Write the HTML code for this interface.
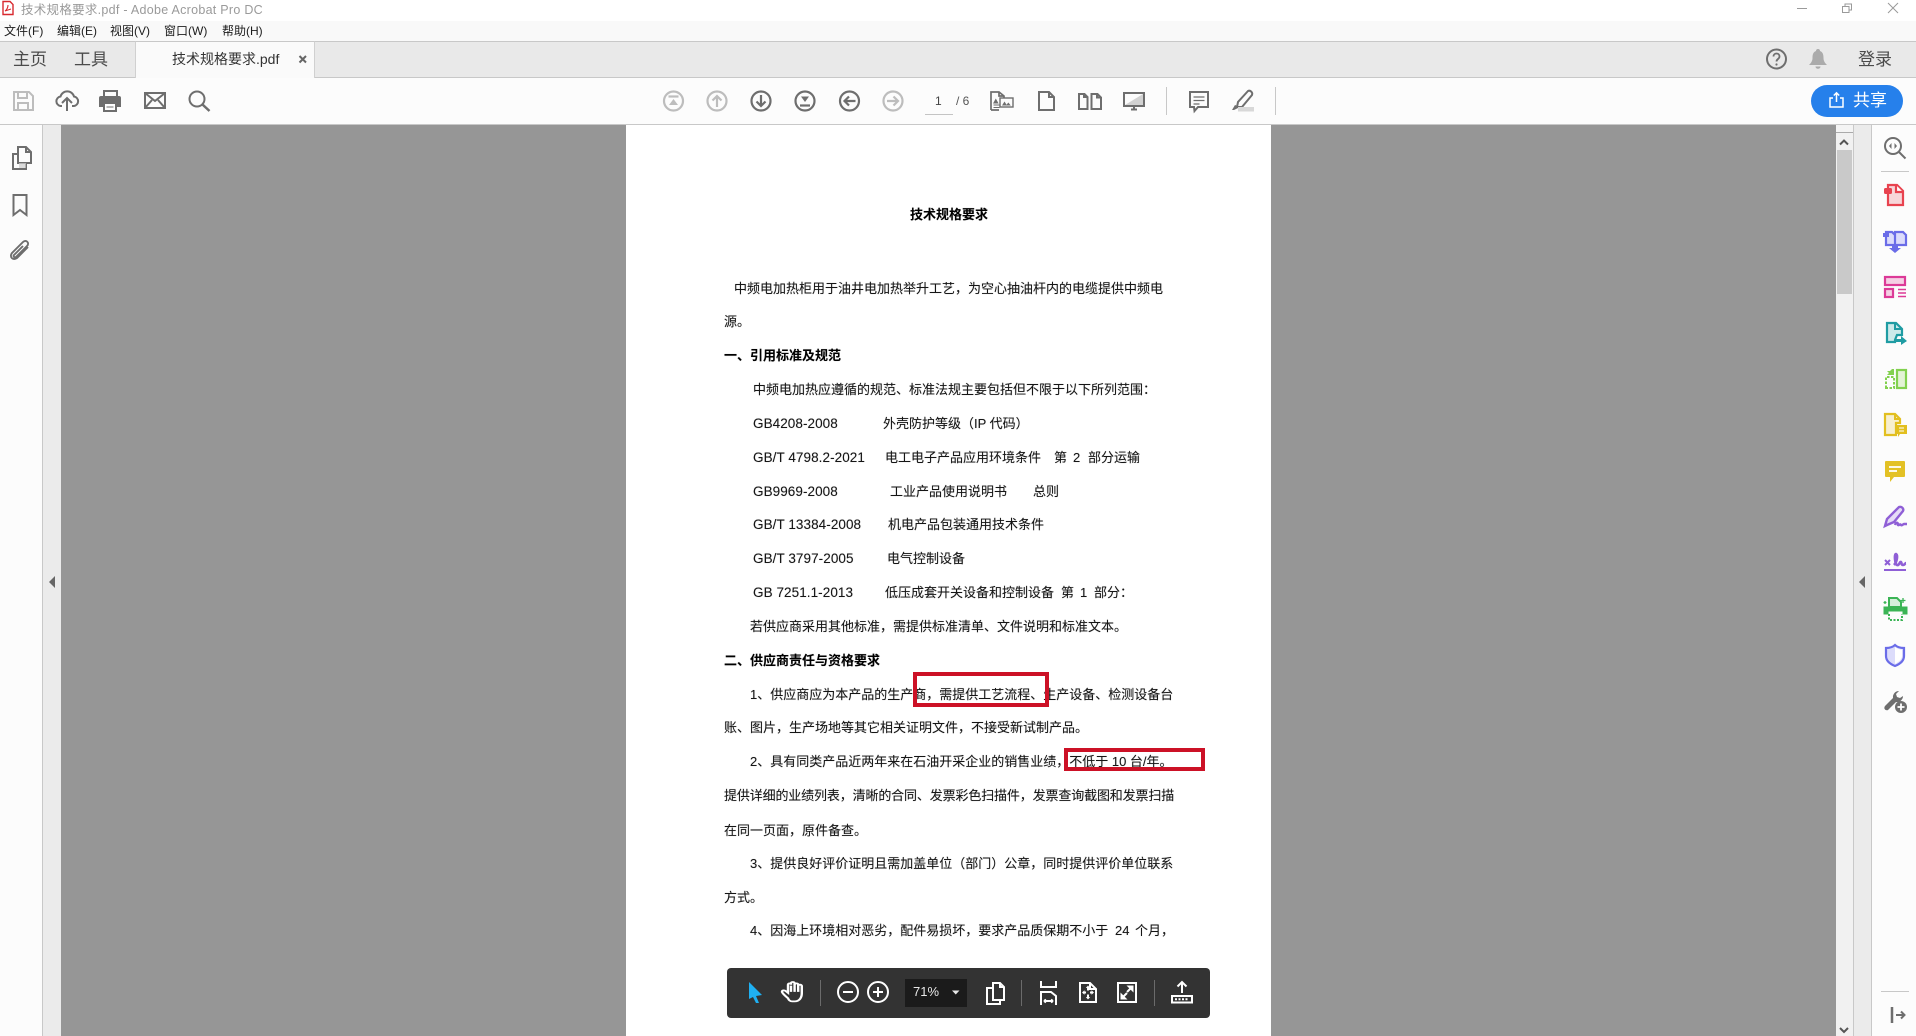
<!DOCTYPE html>
<html lang="zh"><head><meta charset="utf-8"><title>技术规格要求.pdf - Adobe Acrobat Pro DC</title>
<style>
html,body{margin:0;padding:0;width:1916px;height:1036px;overflow:hidden;background:#fff}
body{position:relative;font-family:"Liberation Sans","Noto Sans CJK SC",sans-serif;color:#222}
.b{position:absolute}
.t{position:absolute;white-space:pre;line-height:20px;height:20px}
.p{position:absolute;white-space:pre;line-height:20px;height:20px;font-size:13px;color:#151515;font-family:"Liberation Sans","Noto Sans CJK SC",sans-serif;font-weight:400;text-shadow:0 0 .7px rgba(0,0,0,.35)}
.p i{font-style:normal;font-size:13.5px;letter-spacing:.07px}
.h{font-weight:700;color:#000}
svg{position:absolute;left:0;top:0}
.d{fill:none;stroke:#6e6e6e;stroke-width:2}
.l{fill:none;stroke:#bdbdbd;stroke-width:2}
.w{fill:none;stroke:#fff;stroke-width:2}
</style></head><body>
<div class="b" style="left:0;top:0;width:1916px;height:21px;background:#fff"></div>
<div class="b" style="left:0;top:21px;width:1916px;height:20px;background:#f9f9f9"></div>
<div class="b" style="left:0;top:41px;width:1916px;height:1px;background:#c8c8c8"></div>
<div class="b" style="left:0;top:42px;width:1916px;height:35px;background:#e9e9e9"></div>
<div class="b" style="left:0;top:77px;width:1916px;height:1px;background:#c8c8c8"></div>
<div class="b" style="left:135px;top:41px;width:180px;height:37px;background:#fafafa;border-left:1px solid #d0d0d0;border-right:1px solid #d0d0d0;box-sizing:border-box;border-top:1px solid #c8c8c8"></div>
<div class="b" style="left:0;top:78px;width:1916px;height:46px;background:#fcfcfc"></div>
<div class="b" style="left:0;top:124px;width:1916px;height:1px;background:#c8c8c8"></div>
<div class="b" style="left:0;top:125px;width:42px;height:911px;background:#fcfcfc"></div>
<div class="b" style="left:42px;top:125px;width:1px;height:911px;background:#c8c8c8"></div>
<div class="b" style="left:43px;top:125px;width:18px;height:911px;background:#ebebeb"></div>
<div class="b" style="left:61px;top:125px;width:1775px;height:911px;background:#969696"></div>
<div class="b" style="left:626px;top:125px;width:645px;height:911px;background:#fff"></div>
<div class="b" style="left:1836px;top:125px;width:17px;height:911px;background:#f1f1f1"></div>
<div class="b" style="left:1853px;top:125px;width:1px;height:911px;background:#c8c8c8"></div>
<div class="b" style="left:1854px;top:125px;width:17px;height:911px;background:#ebebeb"></div>
<div class="b" style="left:1871px;top:125px;width:1px;height:911px;background:#c8c8c8"></div>
<div class="b" style="left:1872px;top:125px;width:44px;height:911px;background:#fcfcfc"></div>
<div class="b" style="left:1836px;top:125px;width:17px;height:8px;background:#f4f4f4;border-bottom:1px solid #aaa;box-sizing:border-box"></div>
<div class="b" style="left:1837px;top:150px;width:15px;height:144px;background:#c9c9c9"></div>
<div class="b" style="left:925px;top:114px;width:28px;height:1px;background:#c4c4c4"></div>
<div class="b" style="left:1166px;top:87px;width:1px;height:28px;background:#c8c8c8"></div>
<div class="b" style="left:1275px;top:87px;width:1px;height:28px;background:#c8c8c8"></div>
<div class="b" style="left:1881px;top:171px;width:28px;height:1px;background:#c8c8c8"></div>
<div class="b" style="left:1881px;top:991px;width:28px;height:1px;background:#c8c8c8"></div>
<div class="b" style="left:1811px;top:85px;width:92px;height:32px;border-radius:16px;background:#2680eb"></div>

<div class="t" style="left:21px;top:0;font-size:12.5px;letter-spacing:.28px;color:#9a9a9a">技术规格要求.pdf - Adobe Acrobat Pro DC</div>
<div class="t" style="left:4px;top:21px;font-size:12px;color:#1c1c1c">文件(F)</div>
<div class="t" style="left:57px;top:21px;font-size:12px;color:#1c1c1c">编辑(E)</div>
<div class="t" style="left:110px;top:21px;font-size:12px;color:#1c1c1c">视图(V)</div>
<div class="t" style="left:164px;top:21px;font-size:12px;color:#1c1c1c">窗口(W)</div>
<div class="t" style="left:222px;top:21px;font-size:12px;color:#1c1c1c">帮助(H)</div>
<div class="t" style="left:13px;top:50px;font-size:17px;color:#4b4b4b">主页</div>
<div class="t" style="left:74px;top:50px;font-size:17px;color:#4b4b4b">工具</div>
<div class="t" style="left:172px;top:49px;font-size:14px;color:#333">技术规格要求.pdf</div>
<div class="t" style="left:1858px;top:50px;font-size:17px;color:#4b4b4b">登录</div>
<div class="t" style="left:1853px;top:91px;font-size:17px;color:#fff">共享</div>
<div class="t" style="left:935px;top:91px;font-size:12px;color:#444">1</div>
<div class="t" style="left:956px;top:91px;font-size:12px;color:#555">/ 6</div>

<div class="p h" style="left:910px;top:205px">技术规格要求</div>
<div class="p" style="left:734px;top:279px">中频电加热柜用于油井电加热举升工艺，为空心抽油杆内的电缆提供中频电</div>
<div class="p" style="left:724px;top:312px">源。</div>
<div class="p h" style="left:724px;top:346px">一、引用标准及规范</div>
<div class="p" style="left:753px;top:380px">中频电加热应遵循的规范、标准法规主要包括但不限于以下所列范围：</div>
<div class="p" style="left:753px;top:414px"><i>GB4208-2008</i></div><div class="p" style="left:883px;top:414px">外壳防护等级（IP 代码）</div>
<div class="p" style="left:753px;top:448px"><i>GB/T 4798.2-2021</i></div><div class="p" style="left:885px;top:448px">电工电子产品应用环境条件</div><div class="p" style="left:1054px;top:448px">第</div><div class="p" style="left:1073px;top:448px">2</div><div class="p" style="left:1088px;top:448px">部分运输</div>
<div class="p" style="left:753px;top:482px"><i>GB9969-2008</i></div><div class="p" style="left:890px;top:482px">工业产品使用说明书</div><div class="p" style="left:1033px;top:482px">总则</div>
<div class="p" style="left:753px;top:515px"><i>GB/T 13384-2008</i></div><div class="p" style="left:888px;top:515px">机电产品包装通用技术条件</div>
<div class="p" style="left:753px;top:549px"><i>GB/T 3797-2005</i></div><div class="p" style="left:887px;top:549px">电气控制设备</div>
<div class="p" style="left:753px;top:583px"><i>GB 7251.1-2013</i></div><div class="p" style="left:885px;top:583px">低压成套开关设备和控制设备</div><div class="p" style="left:1061px;top:583px">第</div><div class="p" style="left:1080px;top:583px">1</div><div class="p" style="left:1094px;top:583px">部分：</div>
<div class="p" style="left:750px;top:617px">若供应商采用其他标准，需提供标准清单、文件说明和标准文本。</div>
<div class="p h" style="left:724px;top:651px">二、供应商责任与资格要求</div>
<div class="p" style="left:750px;top:685px">1、供应商应为本产品的生产商，需提供工艺流程、生产设备、检测设备台</div>
<div class="p" style="left:724px;top:718px">账、图片，生产场地等其它相关证明文件，不接受新试制产品。</div>
<div class="p" style="left:750px;top:752px">2、具有同类产品近两年来在石油开采企业的销售业绩，不低于 10 台/年。</div>
<div class="p" style="left:724px;top:786px;letter-spacing:-.14px">提供详细的业绩列表，清晰的合同、发票彩色扫描件，发票查询截图和发票扫描</div>
<div class="p" style="left:724px;top:821px">在同一页面，原件备查。</div>
<div class="p" style="left:750px;top:854px">3、提供良好评价证明且需加盖单位（部门）公章，同时提供评价单位联系</div>
<div class="p" style="left:724px;top:888px">方式。</div>
<div class="p" style="left:750px;top:921px">4、因海上环境相对恶劣，配件易损坏，要求产品质保期不小于</div><div class="p" style="left:1115px;top:921px">24</div><div class="p" style="left:1135px;top:921px">个月，</div>

<div class="b" style="left:913px;top:672px;width:136px;height:35px;border:4px solid #cc1126;box-sizing:border-box"></div>
<div class="b" style="left:1064px;top:748px;width:141px;height:23px;border:4px solid #cc1126;box-sizing:border-box"></div>

<div class="b" style="left:727px;top:968px;width:483px;height:50px;border-radius:4px;background:#333"></div>
<div class="b" style="left:905px;top:979px;width:62px;height:28px;background:#1b1b1b"></div>
<div class="t" style="left:913px;top:982px;font-size:13px;color:#e8e8e8">71%</div>

<svg width="1916" height="1036" viewBox="0 0 1916 1036">
<!-- app icon -->
<path d="M3 1.500h7l3 3v10H3z" fill="#fff" stroke="#d8292f" stroke-width="1.400"/>
<path d="M5 11c2-1 3-4 3-6M5 11l6-2" fill="none" stroke="#d8292f" stroke-width="1.100"/>
<!-- window controls -->
<path d="M1797 8.500h10" stroke="#9a9a9a" fill="none"/>
<path d="M1842.500 6.500h6.500v6h-6.500zM1845 6.500v-2.500h6.500v6h-2.500" stroke="#9a9a9a" fill="none"/>
<path d="M1888 3l10 10M1898 3l-10 10" stroke="#9a9a9a" fill="none"/>
<!-- tab close -->
<path d="M299.500 56l6.500 6.500M306 56l-6.500 6.500" stroke="#666" stroke-width="2" fill="none"/>
<!-- help, bell -->
<circle cx="1776.500" cy="59" r="9.500" class="d"/>
<path d="M1773.500 56.500c0-4 6-4 6 0 0 2.500-3 2.500-3 5" fill="none" stroke="#6e6e6e" stroke-width="1.800"/><circle cx="1776.500" cy="64.500" r="1.100" fill="#6e6e6e"/>
<path d="M1818 49c1.500 0 2 1 2 2 3 1 3.500 4 3.500 7 0 3 1.500 5 3.500 7h-18c2-2 3.500-4 3.500-7 0-3 .5-6 3.500-7 0-1 .5-2 2-2zM1815.500 66.500h5c0 3-5 3-5 0z" fill="#ababab"/>
<!-- share icon -->
<path d="M1833 98h-3v9h13v-9h-3M1836.500 102v-9M1833.800 95.500l2.700-2.700 2.700 2.700" fill="none" stroke="#fff" stroke-width="1.500"/>
<!-- left toolbar -->
<g class="l"><path d="M14 92h15l4 4v14H14zM18 92v6h9v-6M18 110v-7h10v7"/></g>
<g class="d">
<path d="M62 106h-1.500a4.800 4.800 0 0 1 0-9.500 7 7 0 0 1 13.500 0 4.800 4.800 0 0 1 0 9.500h-2"/>
<path d="M67 111V98M62 103l5-5 5 5"/>
<rect x="145" y="93" width="20" height="15"/><path d="M145 93l10 8 10-8M145 108l7-8M165 108l-7-8"/>
<circle cx="197" cy="99" r="7.500" stroke-width="2"/><path d="M202.500 104.500l7 6.500" stroke-width="2.500"/>
</g>
<path d="M104 96v-5h13v5" fill="none" stroke="#6e6e6e" stroke-width="2"/>
<path d="M101 96h18a2 2 0 0 1 2 2v9h-5v-4h-12v4h-5v-9a2 2 0 0 1 2-2z" fill="#6e6e6e"/>
<path d="M104 103h12v8h-12z" fill="#fff" stroke="#6e6e6e" stroke-width="2"/><path d="M106.500 107h7" stroke="#6e6e6e"/>
<!-- nav -->
<g fill="none" stroke-width="2.200">
<circle cx="673.500" cy="101" r="9.500" stroke="#bdbdbd"/><circle cx="717" cy="101" r="9.500" stroke="#bdbdbd"/>
<circle cx="761" cy="101" r="9.500" stroke="#6e6e6e"/><circle cx="805" cy="101" r="9.500" stroke="#6e6e6e"/>
<circle cx="849.500" cy="101" r="9.500" stroke="#6e6e6e"/><circle cx="893" cy="101" r="9.500" stroke="#bdbdbd"/>
<path d="M717 107V96M712.500 100.500l4.500-4.500 4.500 4.500" stroke="#bdbdbd"/>
<path d="M761 95v11M756.500 101.500l4.500 4.500 4.500-4.500" stroke="#6e6e6e"/>
<path d="M855.500 101h-11M849 96.500l-4.500 4.500 4.500 4.500" stroke="#6e6e6e"/>
<path d="M887 101h11M893.500 96.500l4.500 4.500-4.500 4.500" stroke="#bdbdbd"/>
<path d="M668.500 96.500h10" stroke="#bdbdbd"/><path d="M800 105.500h10" stroke="#6e6e6e"/>
</g>
<path d="M669 105l4.500-6 4.500 6z" fill="#bdbdbd"/><path d="M801 96.500l4 5.500 4-5.500z" fill="#6e6e6e"/>
<!-- page views -->
<g class="d" stroke-width="1.600">
<path d="M991 110V92h8l5 4v2M991 110h8M999 92v4h5" stroke-width="1.700"/><path d="M993.500 105h6M993.500 107.500h6" stroke-width="1"/>
<rect x="1000" y="98" width="13" height="9" stroke-width="1.400"/>
<path d="M1039 92h10l5 5v13h-15zM1049 92v5h5"/>
<path d="M1079 94h5.500l3 3v12h-8.500zM1084 94v3h3.500M1091.500 94h6l3.500 3.500V109h-9.500zM1097 94v3.500h4"/>
<path d="M1124 93h20v13h-20zM1131 109.500h6M1134 106v3.500"/>
</g>
<path d="M993 103.500l2.800-5 2.800 5zM1002 105.500l2.500-4 2.500 4zM1006 105.500l2.300-3 2.500 3z" fill="#6e6e6e"/>
<path d="M1125 105l18-11v11z" fill="#d2d2d2"/>
<!-- comment / highlight -->
<path d="M1190 92h18v15h-10l-3.500 4-.5-4h-4z" class="d"/><path d="M1193.500 97h11M1193.500 100.500h11M1193.500 104h6" stroke="#6e6e6e" stroke-width="1.300" fill="none"/>
<path d="M1248 91c2-1 5 1 4 4l-10 12h-5l1-5z" class="d"/><path d="M1240 107l-6 3h-2l3-5z" fill="#6e6e6e"/><rect x="1238" y="107" width="16" height="4.500" fill="#d8d8d8"/>
<!-- left panel -->
<g class="d">
<path d="M18 147h8l5 5v11H18zM26 147v5h5"/><path d="M18 154h-5v15h13v-6"/>
<path d="M13.500 195h13v20l-6.500-5-6.500 5z"/>
<path transform="translate(1 2)" d="M27 245l-11 11c-4 3-8-1-5-5l11-11c3-3 7 1 4 4l-11 11c-2 1-3-1-2-2l9-9" stroke-width="1.900"/>
</g>
<path d="M19 168h7v-5h-7z" fill="#cfcfcf" opacity=".7"/>
<!-- collapse triangles -->
<path d="M55 576v12l-6-6z" fill="#666"/><path d="M1865 576v12l-6-6z" fill="#666"/>
<!-- chevrons -->
<path d="M1840 144.500l4-4 4 4" fill="none" stroke="#555" stroke-width="2"/>
<path d="M1840 1028l4 4 4-4" fill="none" stroke="#555" stroke-width="2"/>
<!-- right tools -->
<circle cx="1893" cy="146" r="8" class="d" stroke-width="2.600"/><path d="M1899 152l6.500 6.500" class="d" stroke-width="3.200"/>
<path d="M1891.500 143l-2.500 3 2.500 3zM1894.500 143l2.500 3-2.500 3z" fill="#6e6e6e"/>
<path d="M1888 185h9l6 6v14h-15z" fill="#f7d6d9" stroke="#e8434f" stroke-width="2.200"/><path d="M1896 185v7h7" fill="#fff" stroke="#e8434f" stroke-width="2.200"/><rect x="1884" y="188" width="8" height="6" rx="1.500" fill="#e8434f"/>
<path d="M1886 232h6l3 3v10h-9zM1899 232h4l3 3v10h-11v-13z" fill="#dcdcfb" stroke="#6a6ce8" stroke-width="2.200"/><path d="M1892 245v3h-3l6 5 6-5h-3v-3z" fill="#6a6ce8"/><rect x="1883" y="233" width="6" height="4" fill="#6a6ce8"/>
<rect x="1885" y="277" width="20" height="8" fill="#f5d0e4" stroke="#dc3a97" stroke-width="2.200"/><rect x="1885" y="289" width="8" height="8" fill="#f5d0e4" stroke="#dc3a97" stroke-width="2.200"/><path d="M1898 289.500h8M1898 293h8M1898 296.500h8" stroke="#dc3a97" stroke-width="1.400"/>
<path d="M1887 323h9l6 6v6h-5l-2 5v2h-8z" fill="#cdeaea" stroke="#1f9ca3" stroke-width="2.200"/><path d="M1895 323v6h7" fill="none" stroke="#1f9ca3" stroke-width="2"/><path d="M1895 339h6v-3l6 5-6 4v-3h-6z" fill="#1f9ca3"/>
<rect x="1897" y="370" width="9" height="18" fill="#e3f3d6" stroke="#82d14f" stroke-width="2.200"/><path d="M1886 388v-11h8v11z" fill="none" stroke="#82d14f" stroke-width="2" stroke-dasharray="2.500 1.500"/><path d="M1894 369v6h-7l2-2-2-2h3l2-2z" fill="#82d14f"/>
<path d="M1885 414h10l5 5v4h-4v12h-11z" fill="#f7efcf" stroke="#e2bf1f" stroke-width="2.200"/><path d="M1895 414v5h5" fill="none" stroke="#e2bf1f" stroke-width="2"/><path d="M1896 425h11v9h-7l-2 3v-3h-2z" fill="#e2bf1f"/><path d="M1899 428h5M1899 431h5" stroke="#fff"/>
<path d="M1886 461h18a1 1 0 0 1 1 1v14a1 1 0 0 1-1 1h-10l-4 5v-5h-4a1 1 0 0 1-1-1v-14a1 1 0 0 1 1-1z" fill="#e3c125"/><path d="M1889 467h12M1889 471h8" stroke="#fff" stroke-width="1.800"/>
<path d="M1899 507c3-1 5 2 4 4l-9 11-7 3-2 1 2-7z" fill="#e6dcf7" stroke="#8f5fd6" stroke-width="2.400"/><path d="M1895 525c1-3 3-3 3 0 1 1 2-2 3 0 1 1 2-1 3-1h3" fill="none" stroke="#8f5fd6" stroke-width="2.400"/>
<path d="M1885 560l5 5M1890 560l-5 5" stroke="#8f5fd6" stroke-width="2"/><path d="M1894 565c3-3 4-10 2-11-2 0-1 10 1 11 2 1 3-4 4-3s0 3 2 3 2-2 3-2" fill="none" stroke="#8f5fd6" stroke-width="2.600"/><path d="M1884 570h22" stroke="#8f5fd6" stroke-width="2"/>
<path d="M1889 598h8l4 4v5h-12z" fill="#d6efdc" stroke="#3bb455" stroke-width="2"/><path d="M1884 607h23v7h-4v-3h-15v3h-4z" fill="#3bb455" stroke="#3bb455"/><path d="M1889 614v6h13v-6" fill="none" stroke="#3bb455" stroke-width="2" stroke-dasharray="2 1.500"/><path d="M1903 598v5M1900.500 600.500h5M1885 601v3M1883.500 602.500h3" stroke="#3bb455" stroke-width="1.300"/>
<path d="M1895 645c2 2 5 3 9 3v8c0 5-4 8-9 10-5-2-9-5-9-10v-8c4 0 7-1 9-3z" fill="#dcdcfb" stroke="#6a6ce8" stroke-width="2.200"/><path d="M1895 647v17c3.500-2 7-4.500 7-8v-6.500c-3 0-5-1-7-2.500z" fill="#fff"/>
<path d="M1899 691a6 6 0 0 0-6 7l-8 8c-2 3 1 5 3 4l8-8a6 6 0 0 0 7-6l-3 2-3-1-1-3z" fill="#6e6e6e"/><circle cx="1901" cy="707" r="6" fill="#6e6e6e"/><path d="M1901 703.500v7M1897.500 707h7" stroke="#fff" stroke-width="1.800"/>
<path d="M1892 1007v16" stroke="#6e6e6e" stroke-width="2.500"/><path d="M1896 1015h8M1901 1011.500l3.500 3.500-3.500 3.500" fill="none" stroke="#6e6e6e" stroke-width="2"/>
<!-- bottom bar -->
<path d="M749 982l13 13-6 1 3 7h-3l-3-6-4 2z" fill="#1fb0f2"/>
<g transform="translate(782 982) scale(1.200 .9) translate(-782 -982)">
<path d="M787 1000c-2-2-5-6-5-7 0-2 2-2 3-1l2 2v-9c0-2 2.500-2 2.500 0v-1.500c0-2 3-2 3 0v1.500c0-2 3-2 3 0v1.500c0-2 3-2 3 0v8c0 5-2 9-6 9h-2c-2 0-3-1.500-3.500-3.500z" class="w" stroke-width="1.600"/><path d="M789.500 993v-7M792.500 993v-8.500M795.500 993v-7.500" class="w" stroke-width="1"/>
</g>
<path d="M820.500 980v26M1021.500 980v26M1154.500 980v26" stroke="#6b6b6b" fill="none"/>
<circle cx="848" cy="992" r="10" class="w"/><path d="M843 992h10" class="w"/>
<circle cx="878" cy="992" r="10" class="w"/><path d="M873 992h10M878 987v10" class="w"/>
<path d="M952 990.500h7.500l-3.750 4z" fill="#e8e8e8"/>
<path d="M993 983h7l4 4v13h-11zM1000 983v4h4M993 988h-6v16h13v-4" class="w"/>
<path d="M1041 981v6h15v-6M1041 1005v-13h10l5 4v9M1044 1001h9M1044 1001l2-1.500M1044 1001l2 1.500M1053 1001l-2-1.500M1053 1001l-2 1.500" class="w" stroke-width="1.500"/>
<path d="M1080 983h10l6 6v13h-16zM1090 983v6h6" class="w"/><path d="M1088 988v2.500M1088 994.500v2.500M1084 992.500h2M1090 992.500h2" class="w" stroke-width="1"/><path d="M1088 985.500l-2.200 2.500h4.400zM1088 999.500l-2.200-2.500h4.400zM1082 992.500l2.500-2.200v4.400zM1094 992.500l-2.500-2.200v4.400z" fill="#fff"/>
<rect x="1118" y="983" width="18" height="19" class="w"/><path d="M1122 998l5-5M1132 987l-5 5" class="w"/><path d="M1120.500 992.500v7h7zM1133.500 992.500v-7h-7z" fill="#fff"/>
<path d="M1182 982v11M1177.500 986.500l4.500-4.500 4.500 4.500" class="w"/><rect x="1172" y="996" width="20" height="6.500" class="w"/><path d="M1175 999.300h14" stroke="#fff" stroke-width="2" stroke-dasharray="2 1.500" fill="none"/>
</svg>
</body></html>
